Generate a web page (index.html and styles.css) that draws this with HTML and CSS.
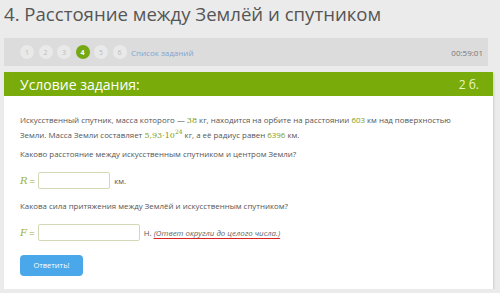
FILE: index.html
```html
<!DOCTYPE html>
<html lang="ru">

<head>
    <meta charset="UTF-8">
    <title>Расстояние между Землёй и спутником</title>
    <link rel="stylesheet" href="styles.css">
</head>

<body>
    <div class="page">
        <h1 class="title">4. Расстояние между Землёй и спутником</h1>

        <div class="nav">
            <div class="steps">
                <span class="step">1</span>
                <span class="step">2</span>
                <span class="step">3</span>
                <span class="step active">4</span>
                <span class="step">5</span>
                <span class="step">6</span>
                <a class="task-list" href="#">Список заданий</a>
            </div>
            <div class="timer">00:59:01</div>
        </div>

        <div class="panel">
            <div class="panel-head">
                <span class="panel-title">Условие задания:</span>
                <span class="points">2 б.</span>
            </div>
            <div class="panel-body">
                <p class="text">Искусственный спутник, масса которого — <span class="num serif">38</span> кг, находится на орбите на расстоянии <span class="num">603</span> км над поверхностью Земли. Масса Земли составляет <span class="num serif">5,93·10<sup>24</sup></span> кг, а её радиус равен <span class="num">6396</span> км.</p>

                <p class="text">Каково расстояние между искусственным спутником и центром Земли?</p>

                <div class="answer">
                    <span class="var">R</span><span class="eq">=</span>
                    <input class="field short" type="text">
                    <span class="unit">км.</span>
                </div>

                <p class="text">Какова сила притяжения между Землёй и искусственным спутником?</p>

                <div class="answer">
                    <span class="var">F</span><span class="eq">=</span>
                    <input class="field long" type="text">
                    <span class="unit">Н. <em class="hint">(Ответ округли до целого числа.)</em></span>
                </div>

                <button class="submit">Ответить!</button>
            </div>
        </div>
    </div>
</body>

</html>
```

FILE: styles.css
```css
body {
    margin: 0;
    background-color: #ebebeb;
    font-family: "Open Sans", sans-serif;
    color: #555;
}

.page {
    padding: 0 4px;
}

.title {
    margin: 0;
    height: 38px;
    font-size: 18.6px;
    font-weight: normal;
    line-height: 27px;
    color: #555;
}

.nav {
    display: flex;
    justify-content: space-between;
    align-items: center;
    width: 484px;
    height: 28px;
    background-color: #dcdcdc;
    box-sizing: border-box;
    padding: 0 5px 0 16px;
}

.steps {
    display: flex;
    align-items: center;
    gap: 4.5px;
}

.step {
    width: 14px;
    height: 14px;
    border-radius: 50%;
    background-color: #e9e9e9;
    color: #bbb;
    font-size: 7px;
    display: flex;
    justify-content: center;
    align-items: center;
}

.step.active {
    background-color: #76a812;
    color: #fff;
    font-weight: bold;
}

.task-list {
    font-size: 8px;
    color: #7ea6d4;
    text-decoration: none;
}

.timer {
    font-size: 8px;
    color: #777;
}

.panel {
    margin-top: 6px;
    width: 489px;
    height: 217px;
    background-color: #fff;
    box-shadow: 1px 1px 2px rgba(0, 0, 0, 0.12);
}

.panel-head {
    display: flex;
    justify-content: space-between;
    align-items: center;
    height: 24px;
    background-color: #79ab0b;
    padding: 0 14px 0 16px;
    color: #fff;
}

.panel-title {
    font-size: 14px;
}

.points {
    font-size: 12px;
    color: #eaf5c8;
}

.panel-body {
    padding: 17px 16px 0;
}

.text {
    margin: 0 0 4px;
    font-size: 7.9px;
    line-height: 15px;
}

.num {
    color: #7e9b16;
}

.serif {
    font-family: "DejaVu Serif", serif;
    font-size: 8px;
    line-height: 1;
}

sup {
    font-size: 6px;
    line-height: 0;
}

.answer {
    display: flex;
    align-items: center;
    margin: 10px 0;
    font-size: 7.9px;
}

.answer + .text {
    margin-bottom: 0;
}

.var {
    font-family: "DejaVu Serif", serif;
    font-style: italic;
    font-size: 10px;
    color: #9bb03e;
}

.eq {
    color: #9bb03e;
    margin: 0 3px 0 2px;
    font-size: 10px;
}

.field {
    height: 17px;
    box-sizing: border-box;
    border: 1px solid #d3d9b4;
    border-radius: 2px;
    background-color: #fff;
    padding: 0;
}

.field.short {
    width: 72px;
}

.field.long {
    width: 102px;
}

.unit {
    margin-left: 4px;
}

.hint {
    color: #666;
    text-decoration: underline solid #d22;
    text-decoration-thickness: 1px;
    text-underline-offset: 2px;
}

.submit {
    margin-top: 0;
    width: 63px;
    height: 21px;
    border: none;
    border-radius: 4px;
    background-color: #4aa8ea;
    color: #fff;
    font-family: "Open Sans", sans-serif;
    font-size: 7.5px;
}
```
